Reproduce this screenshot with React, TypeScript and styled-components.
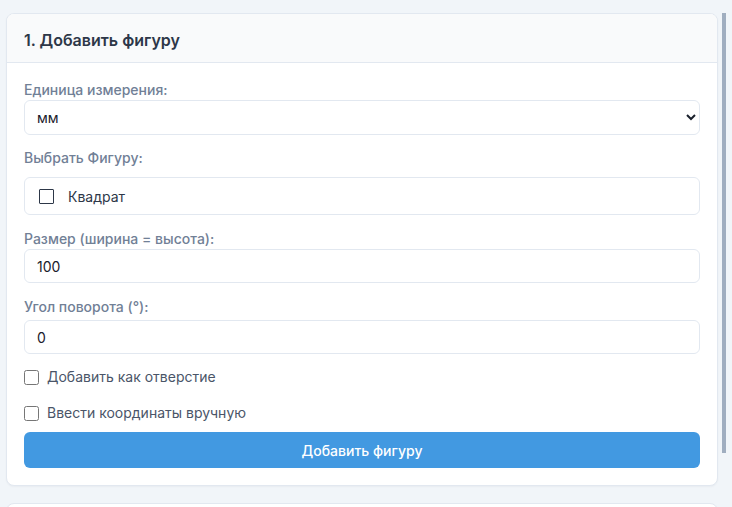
import styled, { createGlobalStyle } from 'styled-components';

const GlobalStyle = createGlobalStyle`
  html, body {
    margin: 0;
    padding: 0;
    background: #f1f5f9;
    font-family: Inter, "Noto Sans", "Liberation Sans", sans-serif;
  }
  * {
    box-sizing: border-box;
  }
`;

const Page = styled.div`
  padding-top: 13px;
  height: 100vh;
`;

const Sidebar = styled.aside`
  position: relative;
  height: 100%;
  overflow: hidden;
  padding: 0 14px 0 6px;
`;

/* scrollbar thumb drawn over the panel's right edge */
const ScrollThumb = styled.div`
  position: absolute;
  top: 0;
  right: 6px;
  width: 4px;
  height: 440px;
  background: #a0aec0;
`;

const Card = styled.section`
  background: #fff;
  border: 1px solid #e2e8f0;
  border-radius: 8px;
  box-shadow: 0 1px 2px rgba(15, 23, 42, 0.04);
  overflow: hidden;

  & + & {
    margin-top: 17px;
  }
`;

const CardHeader = styled.header`
  background: #f9fafb;
  border-bottom: 1px solid #e2e8f0;
  padding: 14px 17px 10px;
`;

const CardTitle = styled.h3`
  margin: 0;
  font-size: 16px;
  line-height: 24px;
  font-weight: 600;
  color: #2d3748;
`;

const CardBody = styled.div<{ $empty?: boolean }>`
  padding: ${(p) => (p.$empty ? '24px 17px' : '17px')};
  display: flex;
  flex-direction: column;
`;

const Group = styled.div<{ $gap?: number }>`
  display: flex;
  flex-direction: column;
  margin-bottom: ${(p) => p.$gap ?? 13}px;
`;

const Label = styled.label<{ $space?: number }>`
  display: block;
  font-size: 14px;
  line-height: 20px;
  font-weight: 500;
  color: #718096;
  margin-bottom: ${(p) => p.$space ?? 0}px;
`;

const Select = styled.select`
  height: 35px;
  width: 100%;
  padding: 0 6px 0 8px;
  font-family: inherit;
  font-size: 14px;
  color: #1a202c;
  background: #fff;
  border: 1px solid #e2e8f0;
  border-radius: 6px;
  outline: none;
`;

const Input = styled.input`
  height: 34px;
  width: 100%;
  padding: 0 12px;
  font-family: inherit;
  font-size: 14px;
  color: #1a202c;
  background: #fff;
  border: 1px solid #e2e8f0;
  border-radius: 6px;
  outline: none;
`;

const ShapeOption = styled.div`
  height: 38px;
  display: flex;
  align-items: center;
  gap: 14px;
  padding: 0 14px;
  border: 1px solid #e2e8f0;
  border-radius: 6px;
  background: #fff;
  font-size: 14px;
  color: #2d3748;
`;

const SquareIcon = styled.span`
  width: 15px;
  height: 15px;
  border: 1.5px solid #2d3748;
  border-radius: 1px;
`;

const CheckRow = styled.label<{ $gap?: number }>`
  display: flex;
  align-items: center;
  gap: 8px;
  font-size: 14px;
  line-height: 20px;
  color: #4a5568;
  margin-bottom: ${(p) => p.$gap ?? 0}px;
`;

const Checkbox = styled.input.attrs({ type: 'checkbox' })`
  width: 15px;
  height: 15px;
  margin: 0;
`;

const PrimaryButton = styled.button`
  height: 36px;
  width: 100%;
  border: none;
  border-radius: 6px;
  background: #4299e1;
  color: #fff;
  font-family: inherit;
  font-size: 14px;
  font-weight: 500;
  cursor: pointer;
`;

export default function App() {
  return (
    <>
      <GlobalStyle />
      <Page>
        <Sidebar>
          <Card>
            <CardHeader>
              <CardTitle>1. Добавить фигуру</CardTitle>
            </CardHeader>
            <CardBody>
              <Group>
                <Label htmlFor="unit">Единица измерения:</Label>
                <Select id="unit" defaultValue="mm">
                  <option value="mm">мм</option>
                  <option value="cm">см</option>
                  <option value="in">дюйм</option>
                </Select>
              </Group>
              <Group $gap={14}>
                <Label $space={9}>Выбрать Фигуру:</Label>
                <ShapeOption>
                  <SquareIcon />
                  Квадрат
                </ShapeOption>
              </Group>
              <Group $gap={14}>
                <Label htmlFor="size">Размер (ширина = высота):</Label>
                <Input id="size" type="text" defaultValue="100" />
              </Group>
              <Group $gap={13}>
                <Label htmlFor="angle" $space={3}>Угол поворота (°):</Label>
                <Input id="angle" type="text" defaultValue="0" />
              </Group>
              <CheckRow $gap={16}>
                <Checkbox />
                Добавить как отверстие
              </CheckRow>
              <CheckRow $gap={9}>
                <Checkbox />
                Ввести координаты вручную
              </CheckRow>
              <PrimaryButton>Добавить фигуру</PrimaryButton>
            </CardBody>
          </Card>
          <Card>
            <CardBody $empty />
          </Card>
          <ScrollThumb />
        </Sidebar>
      </Page>
    </>
  );
}
